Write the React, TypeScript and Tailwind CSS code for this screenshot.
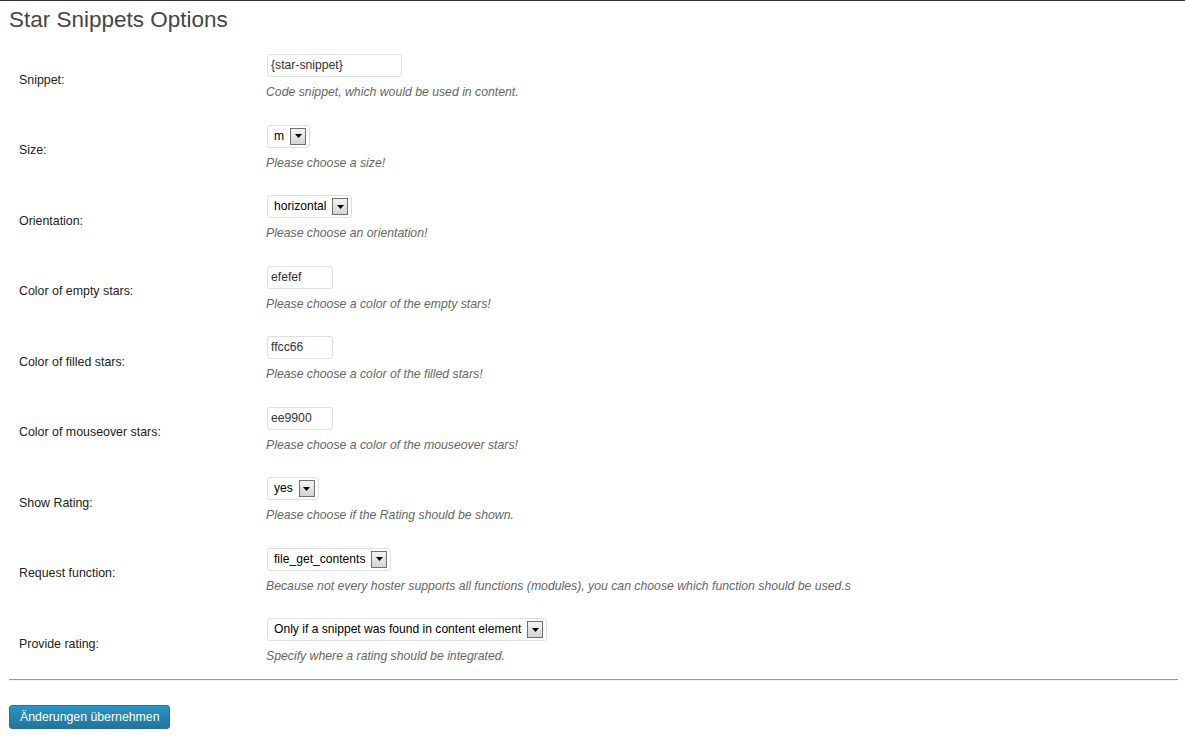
import React from "react";

const font = { fontFamily: '"Liberation Sans", Arial, sans-serif' };

function TextBox({ value, w }: { value: string; w: string }) {
  return (
    <div
      className={`h-[23px] ${w} border border-[#dfdfdf] rounded-[3px] bg-white pl-[3px] flex items-center text-[12.2px] text-[#333]`}
    >
      {value}
    </div>
  );
}

function Select({ value }: { value: string }) {
  return (
    <div className="inline-flex h-[23px] items-center border border-[#dfdfdf] rounded-[3px] bg-white pl-[6px] pr-[3px] text-[12.1px] text-[#000]">
      <span>{value}</span>
      <span className="ml-[6px] w-[16px] h-[17px] border border-[#707070] bg-gradient-to-b from-[#f4f4f4] to-[#d4d4d4] flex items-center justify-center">
        <svg width="7" height="4" viewBox="0 0 7 4">
          <path d="M0 0 L7 0 L3.5 4 Z" fill="#000" />
        </svg>
      </span>
    </div>
  );
}

type Row = { label: string; control: React.ReactNode; desc: string };

const rows: Row[] = [
  { label: "Snippet:", control: <TextBox value="{star-snippet}" w="w-[135px]" />, desc: "Code snippet, which would be used in content." },
  { label: "Size:", control: <Select value="m" />, desc: "Please choose a size!" },
  { label: "Orientation:", control: <Select value="horizontal" />, desc: "Please choose an orientation!" },
  { label: "Color of empty stars:", control: <TextBox value="efefef" w="w-[66px]" />, desc: "Please choose a color of the empty stars!" },
  { label: "Color of filled stars:", control: <TextBox value="ffcc66" w="w-[66px]" />, desc: "Please choose a color of the filled stars!" },
  { label: "Color of mouseover stars:", control: <TextBox value="ee9900" w="w-[66px]" />, desc: "Please choose a color of the mouseover stars!" },
  { label: "Show Rating:", control: <Select value="yes" />, desc: "Please choose if the Rating should be shown." },
  { label: "Request function:", control: <Select value="file_get_contents" />, desc: "Because not every hoster supports all functions (modules), you can choose which function should be used.s" },
  { label: "Provide rating:", control: <Select value="Only if a snippet was found in content element" />, desc: "Specify where a rating should be integrated." },
];

export default function App() {
  return (
    <div className="w-[1185px] h-[739px] bg-white overflow-hidden" style={font}>
      <div className="h-px bg-[#333]" />
      <div className="h-[43px] pl-[9px] pt-[4px]">
        <h2 className="text-[22.5px] leading-[29px] text-[#464646] font-normal">Star Snippets Options</h2>
      </div>
      <div className="ml-[9px]">
        {rows.map((r) => (
          <div key={r.label} className="flex h-[70.5px]">
            <div className="w-[258px] pl-[10px] self-center text-[12.4px] leading-[16px] text-[#222] pt-[1px]">
              {r.label}
            </div>
            <div className="pt-[10px] flex flex-col items-start">
              {r.control}
              <div className="mt-[7px] text-[12.25px] leading-[16px] italic text-[#666] -ml-px">{r.desc}</div>
            </div>
          </div>
        ))}
      </div>
      <div className="ml-[9px] w-[1169px] h-px bg-[#9a9a9a]" />
      <div className="ml-[9px] w-[1169px] h-px bg-[#f1f1f1]" />
      <div className="pl-[9px] pt-[23px]">
        <button className="h-[24px] px-[10px] rounded-[3px] border border-[#21759b] bg-gradient-to-b from-[#2a95c5] to-[#21759b] text-white text-[12.3px] leading-[22px]">
          Änderungen übernehmen
        </button>
      </div>
    </div>
  );
}
